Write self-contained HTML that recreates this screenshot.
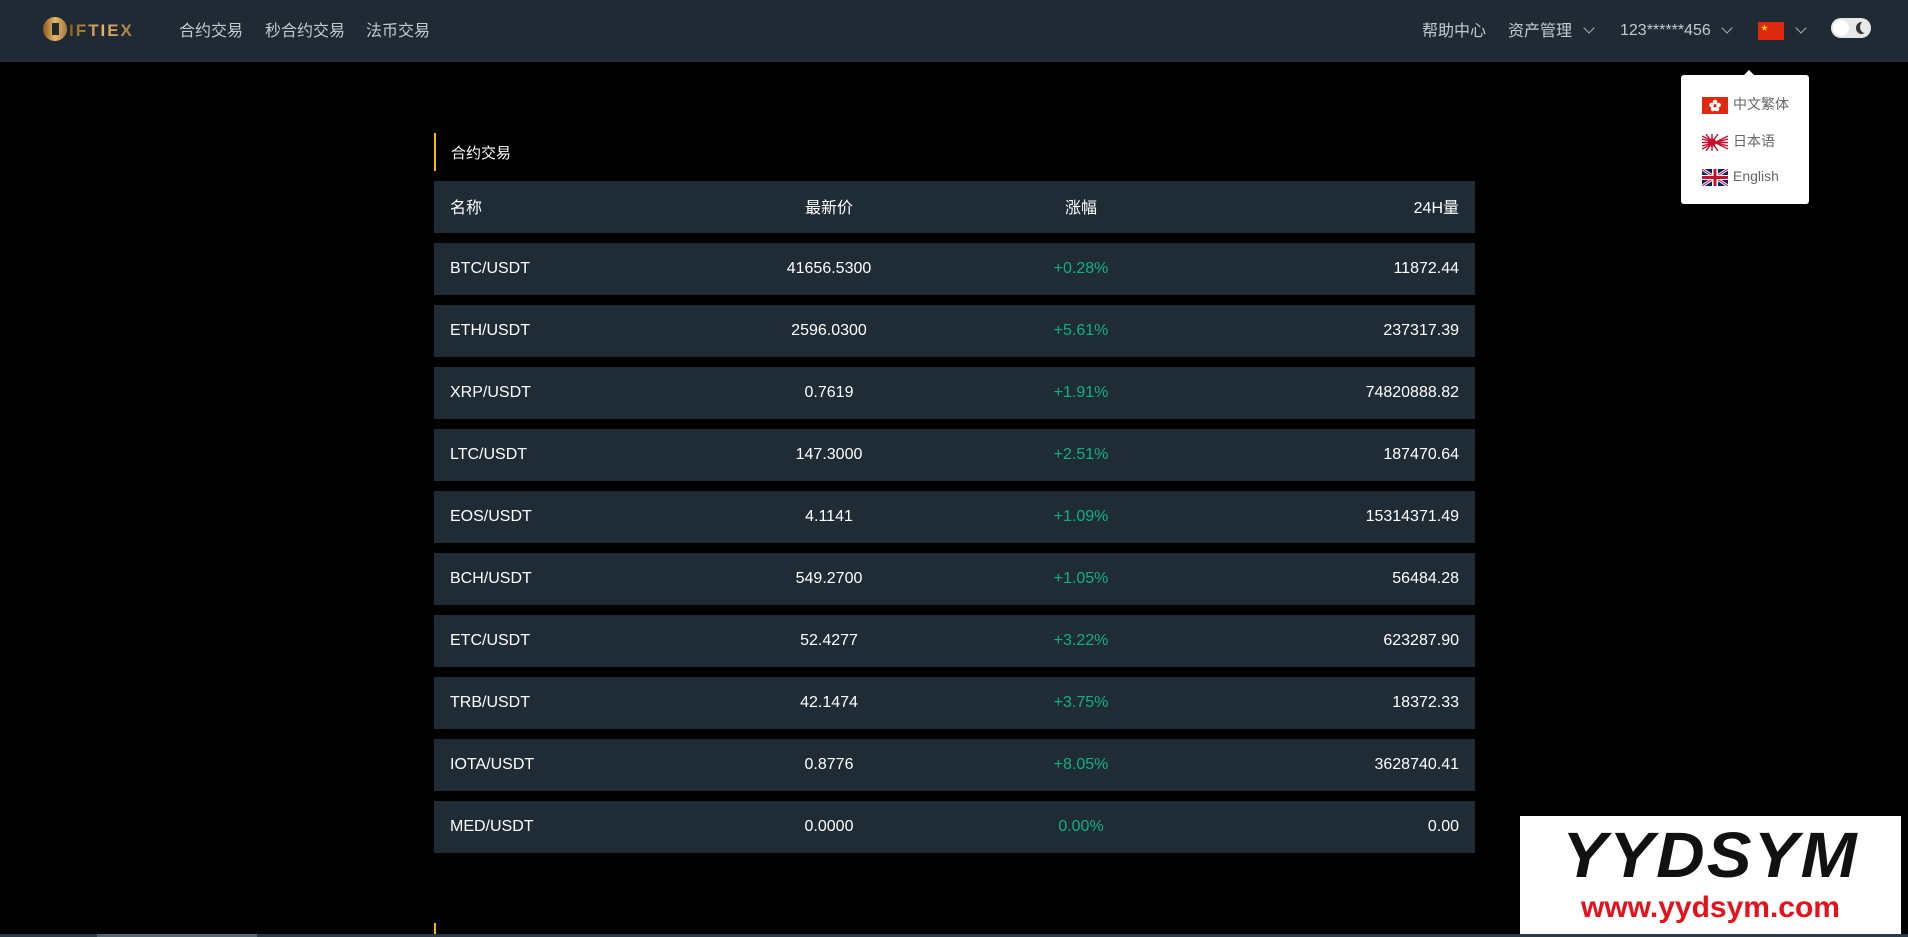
<!DOCTYPE html>
<html><head><meta charset="utf-8"><style>
*{margin:0;padding:0;box-sizing:border-box}
body{width:1908px;height:937px;background:#000;overflow:hidden;position:relative;font-family:"Liberation Sans","Noto Sans CJK SC",sans-serif;color:#fff}
.hdr{position:absolute;left:0;top:0;width:1908px;height:62px;background:#1f2a34}
.t{position:absolute;white-space:nowrap}
.nav{font-size:16px;color:#c3cbcf;top:0;line-height:63px}
.chev{position:absolute;width:8px;height:8px;border-right:1.5px solid #aab3b8;border-bottom:1.5px solid #aab3b8;transform:rotate(45deg);top:24px}
.row{position:absolute;left:434px;width:1041px;height:52px;background:#1f2b35;font-size:16px}
.row span{position:absolute;top:0;line-height:52px;white-space:nowrap}
.c1{left:16px}.c2{left:395px;transform:translateX(-50%)}.c3{left:647px;transform:translateX(-50%);color:#0fb27f}.c4{right:16px}
.dd{position:absolute;left:1681px;top:75px;width:128px;height:129px;background:#fff;border-radius:3px}
.dd .it{position:absolute;left:21px;font-size:14px;color:#666;white-space:nowrap;line-height:18px}
.fl{display:inline-block;width:26px;height:17px;vertical-align:middle;margin-right:5px}
</style></head><body>
<div class="hdr">
 <svg class="t" style="left:43px;top:16px" width="90" height="26" viewBox="0 0 90 26">
  <defs><linearGradient id="g" x1="0" x2="1"><stop offset="0" stop-color="#8a5a1c"/><stop offset=".5" stop-color="#e7b66a"/><stop offset="1" stop-color="#a57a3c"/></linearGradient></defs>
  <circle cx="12" cy="13" r="12" fill="url(#g)"/><rect x="9" y="7" width="7" height="12" fill="#1f2a34"/>
  <text x="26" y="20" font-family="Liberation Sans" font-weight="bold" font-size="17" letter-spacing="2" fill="url(#g)">IFTIEX</text>
 </svg>
 <div class="t nav" style="left:179px">合约交易</div>
 <div class="t nav" style="left:265px">秒合约交易</div>
 <div class="t nav" style="left:366px">法币交易</div>
 <div class="t nav" style="left:1422px">帮助中心</div>
 <div class="t nav" style="left:1508px">资产管理</div>
 <div class="chev" style="left:1585px"></div>
 <div class="t nav" style="left:1620px;line-height:61px">123******456</div>
 <div class="chev" style="left:1723px"></div>
 <svg class="t" style="left:1758px;top:22px" width="26" height="18" viewBox="0 0 26 18"><rect width="26" height="18" fill="#de2910"/><text x="3" y="8" font-size="7" fill="#ffde00">★</text></svg>
 <div class="chev" style="left:1797px"></div>
 <div class="t" style="left:1831px;top:18px;width:40px;height:20px;border-radius:10px;background:#e6e8ea">
  <div style="position:absolute;left:2px;top:2px;width:16px;height:16px;border-radius:50%;background:#fff"></div>
  <div style="position:absolute;left:25px;top:4px;width:11px;height:12px;border-radius:50%;background:#333"></div>
  <div style="position:absolute;left:29px;top:3px;width:10px;height:12px;border-radius:50%;background:#e6e8ea"></div>
 </div>
</div>
<div class="dd">
 <div style="position:absolute;top:-5px;left:63px;width:0;height:0;border:5px solid transparent;border-top:0;border-bottom-color:#fff"></div>
 <div class="it" style="top:20px"><svg class="fl" viewBox="0 0 26 17"><rect width="26" height="17" fill="#de2910"/><g fill="#fff"><circle cx="13" cy="5" r="2.3"/><circle cx="9.5" cy="8" r="2.3"/><circle cx="16.5" cy="8" r="2.3"/><circle cx="11" cy="12" r="2.3"/><circle cx="15" cy="12" r="2.3"/></g></svg>中文繁体</div>
 <div class="it" style="top:57px"><svg class="fl" viewBox="0 0 26 17"><rect width="26" height="17" fill="#fff"/><g stroke="#c8102e" stroke-width="1.4"><line x1="0" y1="8.5" x2="26" y2="8.5"/><line x1="10" y1="0" x2="10" y2="17"/><line x1="0" y1="2" x2="26" y2="15"/><line x1="26" y1="2" x2="0" y2="15"/><line x1="0" y1="5" x2="26" y2="12"/><line x1="0" y1="12" x2="26" y2="5"/><line x1="4" y1="0" x2="16" y2="17"/><line x1="16" y1="0" x2="4" y2="17"/></g><circle cx="10" cy="8.5" r="4" fill="#c8102e"/></svg>日本语</div>
 <div class="it" style="top:92px"><svg class="fl" viewBox="0 0 26 17"><rect width="26" height="17" fill="#012169"/><g stroke="#fff" stroke-width="3"><line x1="0" y1="0" x2="26" y2="17"/><line x1="26" y1="0" x2="0" y2="17"/></g><g stroke="#c8102e" stroke-width="1"><line x1="0" y1="0" x2="26" y2="17"/><line x1="26" y1="0" x2="0" y2="17"/></g><rect x="10" width="6" height="17" fill="#fff"/><rect y="6" width="26" height="5" fill="#fff"/><rect x="11.5" width="3" height="17" fill="#c8102e"/><rect y="7" width="26" height="3" fill="#c8102e"/></svg>English</div>
</div>
<div class="t" style="left:434px;top:133px;width:2px;height:38px;background:#f0b90b"></div>
<div class="t" style="left:451px;top:144px;font-size:15px;line-height:20px">合约交易</div>
<div class="row" style="top:181px"><span class="c1" style="line-height:56px">名称</span><span class="c2" style="line-height:56px">最新价</span><span class="c3" style="color:#fff;line-height:56px">涨幅</span><span class="c4" style="line-height:56px">24H量</span></div>
<div class="row" style="top:243px"><span class="c1">BTC/USDT</span><span class="c2">41656.5300</span><span class="c3">+0.28%</span><span class="c4">11872.44</span></div>
<div class="row" style="top:305px"><span class="c1">ETH/USDT</span><span class="c2">2596.0300</span><span class="c3">+5.61%</span><span class="c4">237317.39</span></div>
<div class="row" style="top:367px"><span class="c1">XRP/USDT</span><span class="c2">0.7619</span><span class="c3">+1.91%</span><span class="c4">74820888.82</span></div>
<div class="row" style="top:429px"><span class="c1">LTC/USDT</span><span class="c2">147.3000</span><span class="c3">+2.51%</span><span class="c4">187470.64</span></div>
<div class="row" style="top:491px"><span class="c1">EOS/USDT</span><span class="c2">4.1141</span><span class="c3">+1.09%</span><span class="c4">15314371.49</span></div>
<div class="row" style="top:553px"><span class="c1">BCH/USDT</span><span class="c2">549.2700</span><span class="c3">+1.05%</span><span class="c4">56484.28</span></div>
<div class="row" style="top:615px"><span class="c1">ETC/USDT</span><span class="c2">52.4277</span><span class="c3">+3.22%</span><span class="c4">623287.90</span></div>
<div class="row" style="top:677px"><span class="c1">TRB/USDT</span><span class="c2">42.1474</span><span class="c3">+3.75%</span><span class="c4">18372.33</span></div>
<div class="row" style="top:739px"><span class="c1">IOTA/USDT</span><span class="c2">0.8776</span><span class="c3">+8.05%</span><span class="c4">3628740.41</span></div>
<div class="row" style="top:801px"><span class="c1">MED/USDT</span><span class="c2">0.0000</span><span class="c3">0.00%</span><span class="c4">0.00</span></div>
<div class="t" style="left:434px;top:923px;width:2px;height:14px;background:#f0b90b"></div>
<div class="t" style="left:0;top:934px;width:1908px;height:3px;background:#2b3a44"></div>
<div class="t" style="left:97px;top:934px;width:160px;height:3px;background:#55646d"></div>
<div class="t" style="left:1520px;top:816px;width:381px;height:118px;background:#fff">
 <div class="t" style="left:0;width:381px;top:4px;text-align:center;font-size:64px;line-height:70px;font-weight:bold;font-style:italic;color:#111;letter-spacing:2px;transform:scaleX(1.05)">YYDSYM</div>
 <div class="t" style="left:0;width:381px;top:74px;text-align:center;font-size:30px;line-height:36px;font-weight:bold;color:#e8101a">www.yydsym.com</div>
</div>
</body></html>
